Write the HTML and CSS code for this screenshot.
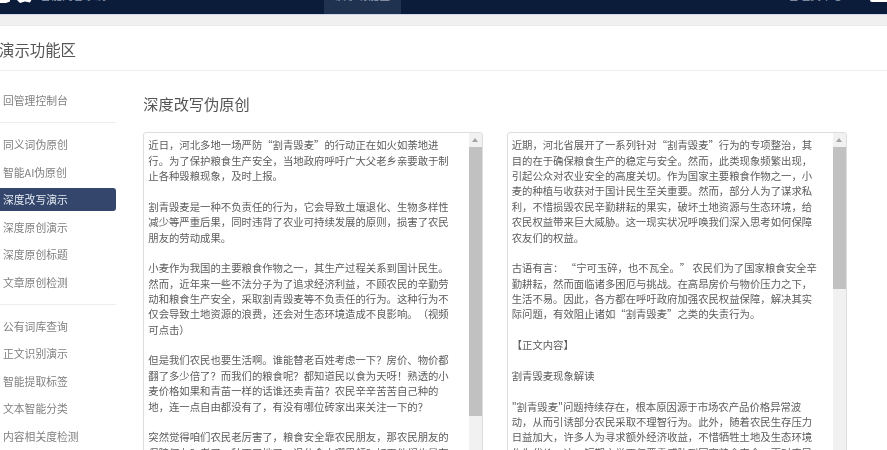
FILE: index.html
```html
<!DOCTYPE html>
<html lang="zh-CN">
<head>
<meta charset="utf-8">
<title>深度改写伪原创</title>
<link rel="stylesheet" href="styles.css">
</head>
<body>
<header class="topbar">
  <svg class="logo" width="34" height="14" viewBox="0 0 34 14"><path d="M0 0h10v2.500L6 4H0zM16 0h16l-2 3.500-5-1-5 1.500z" fill="#fff"/></svg>
  <span class="brand">智能内容系统</span>
  <nav class="topnav"><span class="topnav-item">演示功能区</span></nav>
  <span class="user">管理员中心</span>
  <span class="topbtn"></span>
</header>
<div class="band"></div>
<main class="card">
  <h1 class="card-title">演示功能区</h1>
  <div class="layout">
    <aside class="side">
      <a class="side-item">回管理控制台</a>
      <hr class="side-rule">
      <a class="side-item">同义词伪原创</a>
      <a class="side-item">智能AI伪原创</a>
      <a class="side-item active">深度改写演示</a>
      <a class="side-item">深度原创演示</a>
      <a class="side-item">深度原创标题</a>
      <a class="side-item">文章原创检测</a>
      <hr class="side-rule">
      <a class="side-item">公有词库查询</a>
      <a class="side-item">正文识别演示</a>
      <a class="side-item">智能提取标签</a>
      <a class="side-item">文本智能分类</a>
      <a class="side-item">内容相关度检测</a>
    </aside>
    <section class="content">
      <h2 class="content-title">深度改写伪原创</h2>
      <div class="panes">
        <div class="pane">
          <div class="pane-text">近日，河北多地一场严防“割青毁麦”的行动正在如火如荼地进
行。为了保护粮食生产安全，当地政府呼吁广大父老乡亲要敢于制
止各种毁粮现象，及时上报。

割青毁麦是一种不负责任的行为，它会导致土壤退化、生物多样性
减少等严重后果，同时违背了农业可持续发展的原则，损害了农民
朋友的劳动成果。

小麦作为我国的主要粮食作物之一，其生产过程关系到国计民生。
然而，近年来一些不法分子为了追求经济利益，不顾农民的辛勤劳
动和粮食生产安全，采取割青毁麦等不负责任的行为。这种行为不
仅会导致土地资源的浪费，还会对生态环境造成不良影响。（视频
可点击）

但是我们农民也要生活啊。谁能替老百姓考虑一下？房价、物价都
翻了多少倍了？而我们的粮食呢？都知道民以食为天呀！熟透的小
麦价格如果和青苗一样的话谁还卖青苗？农民辛辛苦苦自己种的
地，连一点自由都没有了，有没有哪位砖家出来关注一下的？

突然觉得咱们农民老厉害了，粮食安全靠农民朋友，那农民朋友的
保障何在？老了、种不了地了，退休金去哪里领？好歹他们也是有</div>
          <div class="scroll"><span class="arrow"></span><span class="thumb thumb-long"></span></div>
        </div>
        <div class="pane">
          <div class="pane-text">近期，河北省展开了一系列针对“割青毁麦”行为的专项整治，其
目的在于确保粮食生产的稳定与安全。然而，此类现象频繁出现，
引起公众对农业安全的高度关切。作为国家主要粮食作物之一，小
麦的种植与收获对于国计民生至关重要。然而，部分人为了谋求私
利，不惜损毁农民辛勤耕耘的果实，破坏土地资源与生态环境，给
农民权益带来巨大威胁。这一现实状况呼唤我们深入思考如何保障
农友们的权益。

古语有言： “宁可玉碎，也不瓦全。” 农民们为了国家粮食安全辛
勤耕耘，然而面临诸多困厄与挑战。在高昂房价与物价压力之下，
生活不易。因此，各方都在呼吁政府加强农民权益保障，解决其实
际问题，有效阻止诸如“割青毁麦”之类的失责行为。

【正文内容】

割青毁麦现象解读

"割青毁麦"问题持续存在，根本原因源于市场农产品价格异常波
动，从而引诱部分农民采取不理智行为。此外，随着农民生存压力
日益加大，许多人为寻求额外经济收益，不惜牺牲土地及生态环境
作为代价。这一短期之举不仅严重威胁到国家粮食安全，更对农民</div>
          <div class="scroll"><span class="arrow"></span><span class="thumb thumb-short"></span></div>
        </div>
      </div>
    </section>
  </div>
</main>
</body>
</html>
```

FILE: styles.css
```css
html, body {
  margin: 0;
  padding: 0;
  height: 450px;
  overflow: hidden;
  background: #fff;
  font-family: "Noto Sans CJK SC", "Liberation Sans", sans-serif;
  text-spacing-trim: space-all;
}

.topbar {
  height: 14px;
  background: #0a1c3a;
  border-bottom: 1px solid #cfd8e6;
  display: flex;
  overflow: hidden;
  color: #8f9bb0;
  font-size: 11px;
  line-height: 14px;
}
.logo { flex: none; margin-top: -1px; }
.brand { margin: -12px 0 0 6px; width: 284px; }
.topnav { width: 77px; background: #1f324f; text-align: center; }
.topnav-item { display: block; margin-top: -12px; }
.user { margin: -12px 0 0 387px; width: 82px; }
.topbtn { width: 17px; height: 2px; background: #fff; border-radius: 0 0 0 2px; }

.band {
  height: 10px;
  background: #f0f0f0;
  border-bottom: 1px solid #e9e9e9;
}

.card { filter: blur(0.25px); }

.card-title {
  margin: 0 0 0 -1px;
  height: 44px;
  line-height: 46px;
  font-size: 15.4px;
  font-weight: 400;
  color: #555;
  border-bottom: 1px solid #eee;
}

.layout { display: flex; }

.side { width: 116px; flex: none; padding-top: 18px; }
.side-item {
  display: block;
  height: 23px;
  line-height: 23px;
  margin-bottom: 4.5px;
  padding-left: 3px;
  font-size: 10.8px;
  color: #808080;
  border-radius: 0 3px 3px 0;
}
.side-item.active { background: #34466b; color: #e6ebf3; }
.side-rule { border: 0; border-top: 1px solid #eee; margin: 10px 0; }

.content { padding-left: 27.3px; flex: 1; min-width: 0; }
.content-title {
  margin: 0;
  padding-top: 20px;
  height: 41px;
  line-height: 24px;
  font-size: 15.2px;
  font-weight: 400;
  color: #555;
}

.panes { display: flex; gap: 23.4px; }
.pane {
  width: 340px;
  height: 330px;
  flex: none;
  box-sizing: border-box;
  display: flex;
  border: 1px solid #ddd;
  border-radius: 3px;
  overflow: hidden;
}
.pane-text {
  flex: 1;
  padding: 4.4px 0 0 4px;
  font-size: 10.36px;
  line-height: 15.36px;
  color: #5c5c5c;
  white-space: pre;
  overflow: hidden;
}
.scroll {
  width: 13px;
  flex: none;
  background: #f1f1f1;
  display: flex;
  flex-direction: column;
  align-items: stretch;
}
.arrow {
  height: 14px;
  position: relative;
}
.arrow::after {
  content: "";
  position: absolute;
  left: 3px;
  top: 5px;
  border: 3.5px solid transparent;
  border-top: 0;
  border-bottom: 4px solid #a3a3a3;
}
.thumb { background: #c1c1c1; display: block; }
.thumb-long { height: 269px; }
.thumb-short { height: 142px; }
```
